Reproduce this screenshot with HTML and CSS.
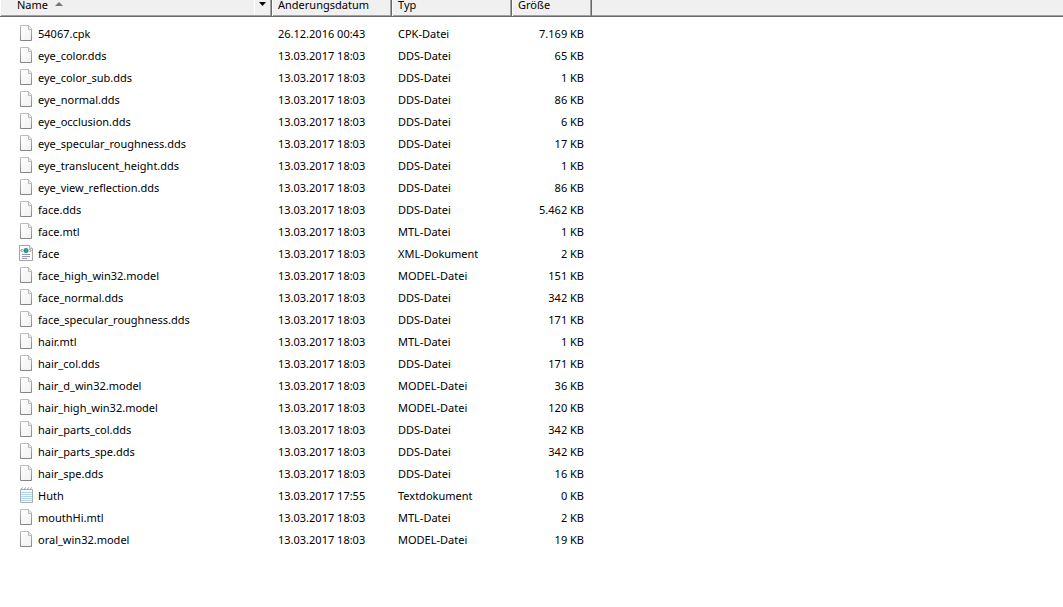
FILE: index.html
```html
<!DOCTYPE html>
<html lang="de">
<head>
<meta charset="utf-8">
<title>Dateiliste</title>
<link rel="stylesheet" href="styles.css">
</head>
<body>
<svg class="sprite" aria-hidden="true">
  <defs>
    <linearGradient id="paper" x1="0" y1="0" x2="1" y2="1">
      <stop offset="0" stop-color="#fff"/><stop offset="1" stop-color="#f0f0f0"/>
    </linearGradient>
    <linearGradient id="edge" x1="0" y1="0" x2="0" y2="1">
      <stop offset="0" stop-color="#bcbcbc"/><stop offset="1" stop-color="#858585"/>
    </linearGradient>
  </defs>
  <symbol id="file" viewBox="0 0 14 16">
    <path d="M1.500 .5H9.500L12.500 3.500V15.500H1.500Z" fill="url(#paper)" stroke="url(#edge)"/>
    <path d="M9.500 .5V4.500H13" fill="#eee" stroke="#b8b8b8"/>
  </symbol>
  <symbol id="xml" viewBox="0 0 14 16">
    <path d="M.5 .5H10.500L13.500 3.500V15.500H.5Z" fill="#fcfcfc" stroke="#a6a6a6"/>
    <path d="M10.500 .5V3.500H13.500" fill="#eee" stroke="#b4b4b4"/>
    <circle cx="7" cy="5.500" r="2.500" fill="#2b8fa5"/>
    <circle cx="7.500" cy="5" r="1" fill="#3fae54"/>
    <path d="M3.500 4L2 5.500L3.500 7M10.500 4L12 5.500L10.500 7" fill="none" stroke="#666880"/>
    <path d="M3 9.500H11M3 11.500H11M3 13.500H8" stroke="#9a98ad"/>
  </symbol>
  <symbol id="text" viewBox="0 0 14 16">
    <path d="M1.500 2.500H13.500V15.500H1.500Z" fill="#f4fafd" stroke="#a4aeb5"/>
    <path d="M2 5.500H13M2 7.500H13M2 9.500H13M2 11.500H13M2 13.500H13" stroke="#b3d3e6"/>
    <path d="M2.500 3V1.500L4 .5M5.500 3V1.500L7 .5M8.500 3V1.500L10 .5M11.500 3V1.500L13 .5" fill="none" stroke="#a5a5a5"/>
  </symbol>
</svg>
<table class="files">
  <colgroup><col class="col-name"><col class="col-date"><col class="col-type"><col class="col-size"><col></colgroup>
  <thead>
    <tr>
      <th class="head-name" aria-sort="ascending"><div class="head-row"><span>Name</span><svg class="sort" viewBox="0 0 8 4" aria-hidden="true"><path d="M0 4L4 0L8 4Z"/></svg><button class="filter" type="button" aria-label="Filter"><svg viewBox="0 0 7 4" aria-hidden="true"><path d="M0 0H7L3.500 4Z"/></svg></button></div></th>
      <th><div class="head-row">Änderungsdatum</div></th>
      <th><div class="head-row">Typ</div></th>
      <th><div class="head-row">Größe</div></th>
      <td class="head-rest"></td>
    </tr>
  </thead>
  <tbody>
    <tr><td><div class="name"><svg><use href="#file"/></svg>54067.cpk</div></td><td>26.12.2016 00:43</td><td>CPK-Datei</td><td class="size">7.169 KB</td></tr>
    <tr><td><div class="name"><svg><use href="#file"/></svg>eye_color.dds</div></td><td>13.03.2017 18:03</td><td>DDS-Datei</td><td class="size">65 KB</td></tr>
    <tr><td><div class="name"><svg><use href="#file"/></svg>eye_color_sub.dds</div></td><td>13.03.2017 18:03</td><td>DDS-Datei</td><td class="size">1 KB</td></tr>
    <tr><td><div class="name"><svg><use href="#file"/></svg>eye_normal.dds</div></td><td>13.03.2017 18:03</td><td>DDS-Datei</td><td class="size">86 KB</td></tr>
    <tr><td><div class="name"><svg><use href="#file"/></svg>eye_occlusion.dds</div></td><td>13.03.2017 18:03</td><td>DDS-Datei</td><td class="size">6 KB</td></tr>
    <tr><td><div class="name"><svg><use href="#file"/></svg>eye_specular_roughness.dds</div></td><td>13.03.2017 18:03</td><td>DDS-Datei</td><td class="size">17 KB</td></tr>
    <tr><td><div class="name"><svg><use href="#file"/></svg>eye_translucent_height.dds</div></td><td>13.03.2017 18:03</td><td>DDS-Datei</td><td class="size">1 KB</td></tr>
    <tr><td><div class="name"><svg><use href="#file"/></svg>eye_view_reflection.dds</div></td><td>13.03.2017 18:03</td><td>DDS-Datei</td><td class="size">86 KB</td></tr>
    <tr><td><div class="name"><svg><use href="#file"/></svg>face.dds</div></td><td>13.03.2017 18:03</td><td>DDS-Datei</td><td class="size">5.462 KB</td></tr>
    <tr><td><div class="name"><svg><use href="#file"/></svg>face.mtl</div></td><td>13.03.2017 18:03</td><td>MTL-Datei</td><td class="size">1 KB</td></tr>
    <tr><td><div class="name"><svg><use href="#xml"/></svg>face</div></td><td>13.03.2017 18:03</td><td>XML-Dokument</td><td class="size">2 KB</td></tr>
    <tr><td><div class="name"><svg><use href="#file"/></svg>face_high_win32.model</div></td><td>13.03.2017 18:03</td><td>MODEL-Datei</td><td class="size">151 KB</td></tr>
    <tr><td><div class="name"><svg><use href="#file"/></svg>face_normal.dds</div></td><td>13.03.2017 18:03</td><td>DDS-Datei</td><td class="size">342 KB</td></tr>
    <tr><td><div class="name"><svg><use href="#file"/></svg>face_specular_roughness.dds</div></td><td>13.03.2017 18:03</td><td>DDS-Datei</td><td class="size">171 KB</td></tr>
    <tr><td><div class="name"><svg><use href="#file"/></svg>hair.mtl</div></td><td>13.03.2017 18:03</td><td>MTL-Datei</td><td class="size">1 KB</td></tr>
    <tr><td><div class="name"><svg><use href="#file"/></svg>hair_col.dds</div></td><td>13.03.2017 18:03</td><td>DDS-Datei</td><td class="size">171 KB</td></tr>
    <tr><td><div class="name"><svg><use href="#file"/></svg>hair_d_win32.model</div></td><td>13.03.2017 18:03</td><td>MODEL-Datei</td><td class="size">36 KB</td></tr>
    <tr><td><div class="name"><svg><use href="#file"/></svg>hair_high_win32.model</div></td><td>13.03.2017 18:03</td><td>MODEL-Datei</td><td class="size">120 KB</td></tr>
    <tr><td><div class="name"><svg><use href="#file"/></svg>hair_parts_col.dds</div></td><td>13.03.2017 18:03</td><td>DDS-Datei</td><td class="size">342 KB</td></tr>
    <tr><td><div class="name"><svg><use href="#file"/></svg>hair_parts_spe.dds</div></td><td>13.03.2017 18:03</td><td>DDS-Datei</td><td class="size">342 KB</td></tr>
    <tr><td><div class="name"><svg><use href="#file"/></svg>hair_spe.dds</div></td><td>13.03.2017 18:03</td><td>DDS-Datei</td><td class="size">16 KB</td></tr>
    <tr><td><div class="name"><svg><use href="#text"/></svg>Huth</div></td><td>13.03.2017 17:55</td><td>Textdokument</td><td class="size">0 KB</td></tr>
    <tr><td><div class="name"><svg><use href="#file"/></svg>mouthHi.mtl</div></td><td>13.03.2017 18:03</td><td>MTL-Datei</td><td class="size">2 KB</td></tr>
    <tr><td><div class="name"><svg><use href="#file"/></svg>oral_win32.model</div></td><td>13.03.2017 18:03</td><td>MODEL-Datei</td><td class="size">19 KB</td></tr>
  </tbody>
</table>
</body>
</html>
```
FILE: styles.css
```css
body {
  margin: 0;
  background: #fff;
  color: #000;
  font: 11px/22px "Noto Sans", "Open Sans", sans-serif;
}
.sprite { display: block; width: 0; height: 0; }
.files {
  width: 100%;
  table-layout: fixed;
  border-collapse: separate;
  border-spacing: 0;
}
.col-name { width: 272px; }
.col-date, .col-type { width: 120px; }
.col-size { width: 80px; }
.files th, .files td {
  padding: 0 8px 0 6px;
  text-align: left;
  font-weight: 400;
  white-space: nowrap;
}
.files thead th, .files .head-rest {
  padding: 0 0 0 6px;
  vertical-align: top;
  background: #f0f0f0;
  border-bottom: 1px solid #696969;
  box-shadow: inset 0 -1px #a0a0a0;
}
.files thead th {
  border-right: 1px solid #696969;
  box-shadow: inset 1px 0 #fff, inset -1px -1px #a0a0a0;
}
.files .head-name { padding-left: 17px; }
.head-row {
  display: flex;
  height: 16px;
  line-height: 10px;
}
.sort {
  width: 8px;
  height: 4px;
  margin: 2px 0 0 7px;
  fill: #777;
}
.filter {
  display: flex;
  justify-content: center;
  width: 16px;
  height: 15px;
  margin: 0 1px 0 auto;
  padding: 2px 0 0;
  border: 0;
  border-left: 1px solid #fff;
  background: none;
}
.filter svg { width: 7px; height: 4px; }
tbody::before {
  content: "";
  display: block;
  height: 6px;
}
.name {
  display: flex;
  align-items: center;
  gap: 5px;
  padding-left: 13px;
}
.name svg { width: 14px; height: 16px; margin-bottom: 2px; }
.files .size { text-align: right; }
```
